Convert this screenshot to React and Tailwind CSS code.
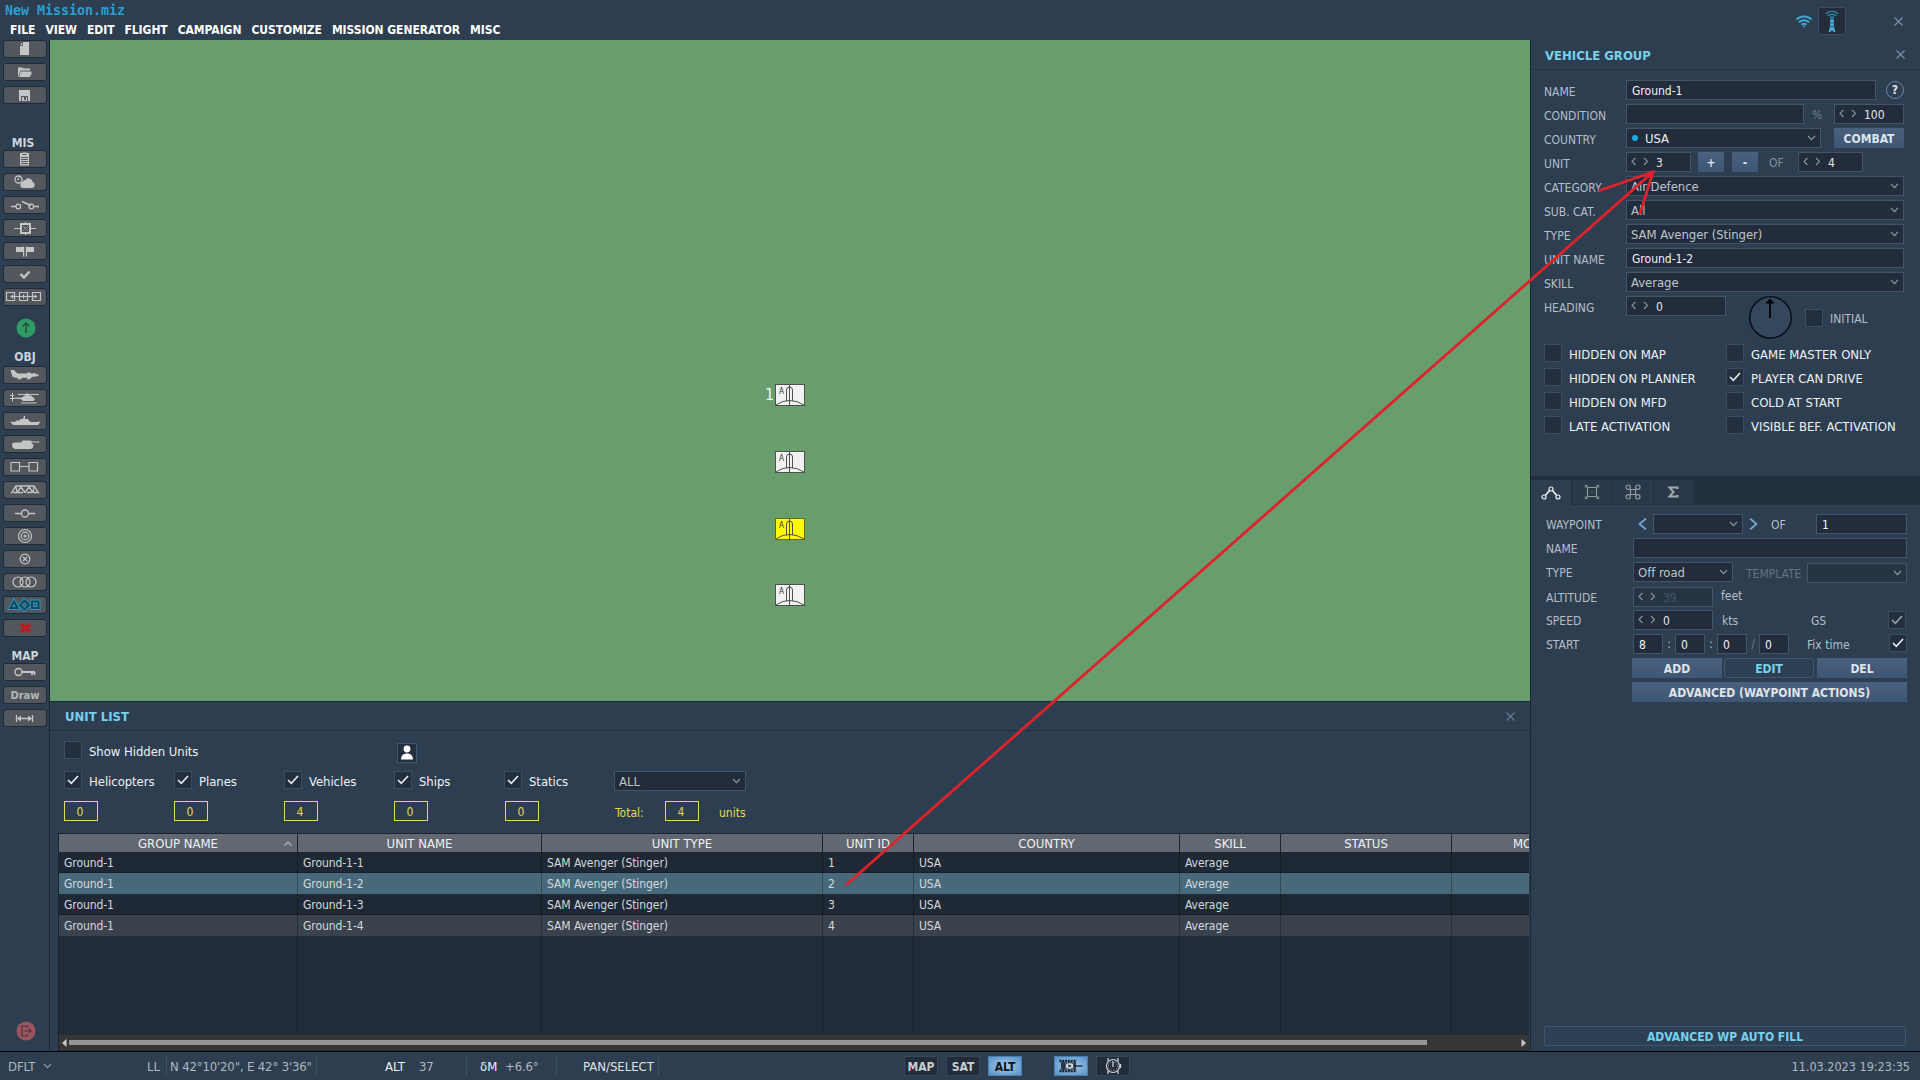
import React from "react";

const INK = "#c4c6c6";

/* ---------- small shared pieces ---------- */

function Chevron({ className = "", color = "#8d9aa8" }) {
  return (
    <svg width="9" height="6" viewBox="0 0 9 6" className={`shrink-0 ${className}`} fill="none" stroke={color} strokeWidth="1.1">
      <path d="M1 1l3.5 3.6L8 1" />
    </svg>
  );
}

function Close({ className = "", color = "#7e92a6" }) {
  return (
    <svg width="9" height="9" viewBox="0 0 9 9" className={`shrink-0 ${className}`} fill="none" stroke={color} strokeWidth="1.1">
      <path d="M.5 .5l8 8M8.5 .5l-8 8" />
    </svg>
  );
}

function Spin({ value, className, dim }) {
  return (
    <div className={`flex h-5 shrink-0 items-center border border-[#41546b] ${dim ? "bg-[#263444]" : "bg-[#222c3a]"} pl-1 text-[12px] ${className}`}>
      <svg width="18" height="9" viewBox="0 0 18 9" fill="none" stroke="#8b96a2" strokeWidth="1.1" className="mb-px shrink-0">
        <path d="M4.500 1L1 4.500L4.500 8M13 1l3.500 3.500L13 8" />
      </svg>
      <span className={`ml-[7px] pt-0.5 ${dim ? "text-[#46566a]" : "text-[#e3e6e9]"}`}>{value}</span>
    </div>
  );
}

function Field({ children, className = "" }) {
  return (
    <div className={`flex h-5 shrink-0 items-center border border-[#41546b] bg-[#222c3a] pt-0.5 pl-[5px] text-[12px] text-[#f0f2f4] ${className}`}>{children}</div>
  );
}

function Select({ children, className = "" }) {
  return (
    <div className={`flex h-5 shrink-0 items-center justify-between border border-[#41546b] bg-[#222c3a] pl-1 pr-1 text-[13px] tracking-[-0.06px] text-[#bfc5cb] ${className}`}>
      <span className="flex items-center pt-0.5">{children}</span>
      <Chevron />
    </div>
  );
}

function Check({ on, className = "", dim }) {
  return (
    <div className={`flex h-[18px] w-[18px] shrink-0 items-center justify-center border border-[#3a4d62] bg-[#232f3e] ${className}`}>
      {on && (
        <svg width="12" height="10" viewBox="0 0 12 10" fill="none" stroke={dim ? "#98a1aa" : "#e6e9ec"} strokeWidth="1.7" className="mb-px">
          <path d="M1 5l3.300 3.300L11 1" />
        </svg>
      )}
    </div>
  );
}

function Button({ children, className = "" }) {
  return (
    <div className={`flex h-5 shrink-0 items-center justify-center bg-linear-to-b from-[#49617f] to-[#3f5774] pt-0.5 text-[12px] font-bold text-[#dfe4e9] ${className}`}>{children}</div>
  );
}

function Outline({ children, className = "" }) {
  return (
    <div className={`flex h-5 shrink-0 items-center justify-center rounded-[2px] border border-[#41546b] bg-[#2e4054] pt-0.5 text-[12px] font-bold text-[#76d1ec] ${className}`}>{children}</div>
  );
}

/* ---------- left tool bar ---------- */

const icons = {
  file: (
    <g fill={INK}>
      <path d="M20 2h6v13H17V6h3z" />
      <path d="M17 5L19.300 2.500V5z" />
    </g>
  ),
  open: (
    <g fill={INK}>
      <path d="M15 14V4.500h4.500l1 1H27v2H17.500L16 12z" />
      <path d="M18 8.500H28.500V11L26.500 14H16z" />
    </g>
  ),
  save: (
    <g fill={INK}>
      <path fillRule="evenodd" d="M16 4h11v11H16zM18 10v5h7v-5z" />
      <path d="M19 11h2v3h2v-3h1v4h-5z" />
    </g>
  ),
  brief: (
    <g>
      <path fill={INK} d="M17 3h2.500V2.500h4V3H26v12.500H17z" />
      <path d="M19.500 4.500h4M18 7.500h7M18 9.500h7M18 11.500h7M18 13.500h7" stroke="#51575c" strokeWidth="1" />
    </g>
  ),
  weather: (
    <g>
      <circle cx="15.500" cy="6.500" r="3.500" fill="none" stroke={INK} strokeWidth="1.300" />
      <path d="M15.700 4.500v2.200H14" stroke={INK} fill="none" />
      <path fill={INK} d="M20 15a3.200 3.200 0 0 1-.6-6.200 2.500 2.500 0 0 1 2.700-1.600 4.200 4.200 0 0 1 7.600 1.800A3.100 3.100 0 0 1 29 15z" />
    </g>
  ),
  trigger: (
    <g fill="none" stroke={INK} strokeWidth="1.200">
      <path d="M8 10.500h5M30.500 10.500H36M19 5.500l9 4" strokeWidth="1.400" />
      <circle cx="15.300" cy="10.500" r="2.300" />
      <circle cx="28.300" cy="10.500" r="2.300" />
    </g>
  ),
  target: (
    <g fill="none" stroke={INK}>
      <path d="M11 9.500h7M26 9.500h7M22.500 3v3M22.500 13v3" />
      <rect x="18" y="5" width="9" height="9" strokeWidth="2" />
      <path d="M20.500 7.500l4 4M24.500 7.500l-4 4" strokeDasharray="1.500 1" />
    </g>
  ),
  joint: (
    <g fill={INK}>
      <path d="M13 5h7v5h-7zM24 5h7v5h-7zM20 4.500h1.200V14.500H20zM22.800 4.500H24V14.500h-1.200z" />
    </g>
  ),
  check: <path d="M17.500 9l3.500 3.500L26.500 6.500" fill="none" stroke={INK} strokeWidth="2.400" />,
  chain: (
    <g fill="none" stroke={INK} strokeWidth="1.200">
      <path d="M3.500 4.500h8v8h-8zM16.500 4.500h8v8h-8zM29.500 4.500h8v8h-8zM8 8.500h26M20.500 6.500v4" />
      <path fill={INK} stroke="none" d="M10 6.500v4L7 8.500zM31.500 6.500v4l3-2z" />
    </g>
  ),
  plane: (
    <path fill={INK} d="M7.500 4H11l3.500 3.500h9L25 6.500h2l1.500 1.300L31 7l3 1.200 1.500 .3V10l-5 .8-2 .5-1.500 2h-3l.5-1.500h-5.500l-1 1.500h-3.500l.5-1.500H13l-3-.8-1-1.500z" />
  ),
  heli: (
    <g>
      <path fill={INK} d="M10 8.800l9 -.3 2.500-2h6.500l4 3.500-1.500 2H20l-2.500-2-7.500-.2zM23 4.500h2.500V7H23z" />
      <path d="M15 5.500h21M9.500 4v8.500M7 6.500h4M7 9.500h4M18 14h15.500" stroke={INK} />
    </g>
  ),
  ship: (
    <path fill={INK} d="M7 9.500l5 .5 1-1.500h3.500l1-1.500h2.500l1-3h1v3h3l1 1.500 1.500 1.500h5.500l4.500-.5-2.500 3.500H10z" />
  ),
  tank: (
    <path fill={INK} d="M9 8.500l3-1h6L19.500 5.500h8l1.500 1h7.500v1H29l-.5 1 2 1-.5 3-2 1.500H12L9.500 12.500z" />
  ),
  link: (
    <g fill="none" stroke={INK} strokeWidth="1.200">
      <path d="M8 4.500h8.500v8.500H8zM26 4.500h8.500v8.500H26zM16.500 8.500H26" />
    </g>
  ),
  bridge: (
    <g fill="none" stroke={INK} strokeWidth="1.300">
      <path d="M8 12.500L13 5H31L36 12.500M10 11.500h4L13 6M14 11.500l4-5.500 4 5.500 4-5.500 4 5.500M15 11.500h5M24 11.500h5M30 11.500h4.500M30 11.500L31 6" />
    </g>
  ),
  node: (
    <g fill="none" stroke={INK} strokeWidth="1.300">
      <path d="M12 9.500h6.500M25.500 9.500H32" />
      <circle cx="22" cy="9.500" r="3.500" />
    </g>
  ),
  rings: (
    <g fill="none" stroke={INK} strokeWidth="1.200">
      <circle cx="22" cy="9" r="6.500" />
      <circle cx="22" cy="9" r="3.800" />
      <circle cx="22" cy="9" r="1" />
    </g>
  ),
  cross: (
    <g fill="none" stroke={INK} strokeWidth="1.200">
      <circle cx="22" cy="9" r="4.800" />
      <path d="M20 7l4 4M24 7l-4 4" />
    </g>
  ),
  circles: (
    <g fill="none" stroke={INK} strokeWidth="1.200">
      <circle cx="15" cy="9" r="5" />
      <circle cx="22" cy="9" r="5" />
      <circle cx="28" cy="9" r="5" />
    </g>
  ),
  shapes: (
    <g fill="none">
      <g stroke="#2699bb" strokeWidth="4">
        <path d="M11 5.500l3.500 6.500H7.500zM21.500 4.500L26 9l-4.500 4.500L17 9zM29 5.500h6.500V12H29z" />
      </g>
      <g stroke="#0f4a60" strokeWidth="2.200">
        <path d="M11 5.500l3.500 6.500H7.500zM21.500 4.500L26 9l-4.500 4.500L17 9zM29 5.500h6.500V12H29z" />
      </g>
    </g>
  ),
  del: <path d="M18 5l9 8M27 5l-9 8" stroke="#c2181c" strokeWidth="3.400" />,
  key: (
    <g fill="none" stroke={INK} strokeWidth="1.400">
      <circle cx="15.500" cy="9" r="3.500" />
      <path d="M19 9h13M29 9v3M31.500 9v3" strokeWidth="1.800" />
    </g>
  ),
  ruler: (
    <g stroke={INK} fill={INK}>
      <path d="M13.500 6v7M29.500 6v7M15 9.500h13" strokeWidth="1.300" />
      <path stroke="none" d="M14 9.500l4-3v6zM29 9.500l-4-3v6z" />
    </g>
  ),
};

function Tool({ icon, label }) {
  return (
    <div className="flex h-[18px] w-11 shrink-0 items-center justify-center rounded-[3px] border border-[#1f2a36] bg-[#51575c]">
      {label ? (
        <span className="font-['DejaVu_Sans'] text-[10px] font-bold text-[#b4b7b8]">{label}</span>
      ) : (
        <svg width="44" height="18" viewBox="0 0 44 18" className="shrink-0">{icons[icon]}</svg>
      )}
    </div>
  );
}

function ToolGroup({ items, className = "" }) {
  return (
    <div className={`flex flex-col gap-[5px] ${className}`}>
      {items.map((i) => (i === "draw" ? <Tool key={i} label="Draw" /> : <Tool key={i} icon={i} />))}
    </div>
  );
}

function ToolLabel({ children, className = "" }) {
  return <div className={`flex h-4 w-11 shrink-0 items-center justify-center pt-0.5 text-[12px] font-bold text-[#cbd3dc] ${className}`}>{children}</div>;
}

function Sidebar() {
  return (
    <div className="flex w-[50px] shrink-0 flex-col border-r border-[#1c2733] pl-[3px]">
      <ToolGroup items={["file", "open", "save"]} />
      <ToolLabel className="mt-[30px] -ml-0.5">MIS</ToolLabel>
      <ToolGroup items={["brief", "weather", "trigger", "target", "joint", "check", "chain"]} />
      <svg width="20" height="20" viewBox="0 0 20 20" className="mt-[12px] ml-[12.500px] shrink-0">
        <circle cx="10" cy="10" r="9.500" fill="#2f9b63" />
        <path d="M10 15V5M6.500 8.500L10 5l3.500 3.500" fill="none" stroke="#1c4a3c" strokeWidth="1.300" />
      </svg>
      <ToolLabel className="mt-[10px] mb-0.5">OBJ</ToolLabel>
      <ToolGroup items={["plane", "heli", "ship", "tank", "link", "bridge", "node", "rings", "cross", "circles", "shapes", "del"]} />
      <ToolLabel className="mt-[10px]">MAP</ToolLabel>
      <ToolGroup items={["key", "draw", "ruler"]} />
      <svg width="20" height="20" viewBox="0 0 20 20" className="mt-auto mb-[10px] ml-[12.500px] shrink-0">
        <circle cx="10" cy="10" r="9.500" fill="#9b5560" />
        <path d="M11.500 7V5H6v10h5.500v-2M8.500 10H15M13 8l2 2-2 2" fill="none" stroke="#50303e" strokeWidth="1.200" />
      </svg>
    </div>
  );
}

/* ---------- map ---------- */

function UnitMark({ active, className }) {
  return (
    <svg width="30" height="22" viewBox="0 0 30 22" className={`absolute left-[725px] ${className}`}>
      <rect x=".5" y=".5" width="29" height="21" fill={active ? "#fdfb00" : "#f1f1f1"} stroke={active ? "#6b6a10" : "#4c5450"} />
      <g fill="none" stroke="#3c3c40">
        <path d="M14.500 1v21M11.500 17V6a3 3 0 0 1 6 0v11M1 21Q7 16.500 14.500 16.500T29 21" strokeWidth=".9" />
      </g>
      <text x="4" y="9.500" fontSize="8" fontFamily="DejaVu Sans Condensed" fill="#2c2c30">A</text>
    </svg>
  );
}

function MapView() {
  return (
    <div className="relative h-[661px] shrink-0 bg-[#689d6e]">
      <span className="absolute top-[343px] left-[715px] text-[16px] text-[#e9f6e9]">1</span>
      <UnitMark className="top-[344px]" />
      <UnitMark className="top-[411px]" />
      <UnitMark active className="top-[478px]" />
      <UnitMark className="top-[544px]" />
    </div>
  );
}

/* ---------- unit list ---------- */

const columns = [
  ["GROUP NAME", "w-[239px]"],
  ["UNIT NAME", "w-[244px]"],
  ["UNIT TYPE", "w-[281px]"],
  ["UNIT ID", "w-[91px]"],
  ["COUNTRY", "w-[266px]"],
  ["SKILL", "w-[101px]"],
  ["STATUS", "w-[171px]"],
  ["MODEL", "w-[165px]"],
];

const rows = [1, 2, 3, 4].map((n) => ["Ground-1", `Ground-1-${n}`, "SAM Avenger (Stinger)", String(n), "USA", "Average", "", ""]);
const rowTone = [
  "bg-[#1f2935] border-[#151e29]",
  "bg-[#48697a] border-[#48697a]",
  "bg-[#1f2935] border-[#151e29]",
  "bg-[#3a424d] border-[#3a424d]",
];

function Count({ value, className = "" }) {
  return (
    <div className={`flex h-5 w-[34px] shrink-0 items-center justify-center border border-[#e8da4e] pt-0.5 pr-0.5 text-[12px] text-[#e8da4e] ${className}`}>{value}</div>
  );
}

function UnitList() {
  return (
    <div className="flex min-h-0 flex-1 flex-col border-t border-[#1c2733] text-[13px] text-[#eef1f4]">
      <div className="flex h-[29px] shrink-0 items-center justify-between border-b border-[#223040] pr-[15px] pl-[15px]">
        <span className="pt-0.5 text-[13px] font-bold text-[#76d1ec]">UNIT LIST</span>
        <Close color="#667c92" />
      </div>
      <div className="mt-[10px] flex h-[22px] shrink-0 items-start pl-[14px]">
        <Check />
        <span className="mt-px ml-[7px] w-[308px] leading-5 tracking-[-0.06px]">Show Hidden Units</span>
        <div className="mt-0.5 flex h-5 w-5 items-end justify-center border border-[#41546b] bg-[#232f3e] pb-0.5">
          <svg width="14" height="15" viewBox="0 0 14 15" fill="#fff">
            <circle cx="7" cy="4" r="3.400" />
            <path d="M1 14.500c0-4 2.500-6 6-6s6 2 6 6z" />
          </svg>
        </div>
      </div>
      <div className="mt-2 flex h-5 shrink-0 items-start pl-[14px]">
        {["Helicopters", "Planes", "Vehicles", "Ships", "Statics"].map((n) => (
          <div key={n} className="flex w-[110px] shrink-0">
            <Check on />
            <span className="mt-px ml-[7px] leading-5 tracking-[-0.06px]">{n}</span>
          </div>
        ))}
        <Select className="w-[132px]">ALL</Select>
      </div>
      <div className="mt-[10px] flex h-5 shrink-0 items-center pl-[14px]">
        {["0", "0", "4", "0"].map((v, i) => (
          <Count key={i} value={v} className="mr-[76px]" />
        ))}
        <Count value="0" className="ml-px" />
        <span className="mt-[3px] ml-[76px] w-[50px] text-[12px] text-[#e8da4e]">Total:</span>
        <Count value="4" />
        <span className="mt-[3px] ml-5 text-[12px] text-[#e8da4e]">units</span>
      </div>
      <div className="mt-3 mr-px ml-2 flex min-h-0 flex-1 flex-col overflow-hidden border-t border-l border-[#1a2430] bg-[#232d3a]">
        <div className="flex h-[18px] shrink-0 bg-[#616872]">
          {columns.map(([name, w], i) => (
            <div key={name} className={`flex shrink-0 items-center justify-center border-r border-[#1c2632] ${w}`}>
              {i === 0 && <span className="w-4" />}
              <span className="flex-1 pt-0.5 text-center leading-[18px]">{name}</span>
              {i === 0 && (
                <svg width="8" height="5" viewBox="0 0 8 5" className="mr-[5px] ml-[3px]" fill="none" stroke="#b9bec5" strokeWidth="1.100">
                  <path d="M.5 4.500L4 1l3.500 3.500" />
                </svg>
              )}
            </div>
          ))}
        </div>
        {rows.map((r, ri) => (
          <div key={ri} className={`flex h-[21px] shrink-0 border-b text-[12px] tracking-[-0.07px] text-[#d5d9dd] ${rowTone[ri]}`}>
            {r.map((c, ci) => (
              <div key={ci} className={`flex shrink-0 items-center border-r border-black/30 pt-0.5 pl-[5px] ${columns[ci][1]}`}>{c}</div>
            ))}
          </div>
        ))}
        <div className="flex min-h-0 flex-1">
          {columns.map(([name, w]) => (
            <div key={name} className={`shrink-0 border-r border-[#18222e] ${w}`} />
          ))}
        </div>
        <div className="mb-px flex h-[15px] shrink-0 items-center bg-[#363636]">
          <svg width="5" height="8" viewBox="0 0 5 8" className="ml-[3px] shrink-0"><path d="M4.500 0v8L0 4z" fill="#c9c9c9" /></svg>
          <div className="ml-0.5 h-[5px] w-[1358px] shrink-0 bg-[#969696]" />
          <svg width="5" height="8" viewBox="0 0 5 8" className="mr-[3px] ml-auto shrink-0"><path d="M.5 0v8L5 4z" fill="#c9c9c9" /></svg>
        </div>
      </div>
    </div>
  );
}

/* ---------- right panel ---------- */

function Row({ label, children }) {
  return (
    <div className="flex h-5 shrink-0 items-center">
      <span className="w-[82px] shrink-0 pt-[3px] text-[12px] text-[#b6bfc8]">{label}</span>
      {children}
    </div>
  );
}

function WpRow({ label, children, className = "" }) {
  return (
    <div className={`flex h-5 shrink-0 items-center text-[12px] text-[#b6bfc8] ${className}`}>
      <span className="w-[87px] shrink-0 pt-0.5">{label}</span>
      {children}
    </div>
  );
}

function Flag({ children, on }) {
  return (
    <div className="flex h-[18px] items-center text-[13px] whitespace-nowrap text-[#eef1f4]">
      <Check on={on} />
      <span className="ml-[7px] pt-[3px]">{children}</span>
    </div>
  );
}

function VehicleGroup() {
  return (
    <>
      <div className="flex h-[30px] shrink-0 items-center justify-between border-b border-[#223040] pr-[15px] pl-[14px]">
        <span className="pt-0.5 text-[13px] font-bold text-[#76d1ec]">VEHICLE GROUP</span>
        <Close />
      </div>
      <div className="mt-[10px] flex shrink-0 flex-col gap-1 pl-[13px]">
        <Row label="NAME">
          <Field className="w-[250px]">Ground-1</Field>
          <div className="ml-[10px] flex h-[18px] w-[18px] items-center justify-center rounded-full border border-[#6c83a0] text-[12px] font-bold text-[#e3e6e9]">?</div>
        </Row>
        <Row label="CONDITION">
          <Field className="w-[178px]" />
          <span className="w-[30px] pt-0.5 pl-2 text-[12px] text-[#74808d]">%</span>
          <Spin value="100" className="w-[70px]" />
        </Row>
        <Row label="COUNTRY">
          <Select className="w-[195px]">
            <i className="mb-0.5 ml-px h-1.5 w-1.5 rounded-full bg-[#21a9e6]" />
            <span className="ml-[7px] text-[#eef1f4]">USA</span>
          </Select>
          <Button className="ml-[13px] w-[70px]">COMBAT</Button>
        </Row>
        <Row label="UNIT">
          <Spin value="3" className="w-[65px]" />
          <Button className="ml-[7px] w-[26px]">+</Button>
          <Button className="ml-2 w-[26px]">-</Button>
          <span className="w-10 pt-0.5 pl-[11px] text-[12px] text-[#8592a0]">OF</span>
          <Spin value="4" className="w-[65px]" />
        </Row>
        <Row label="CATEGORY"><Select className="w-[278px]">Air Defence</Select></Row>
        <Row label="SUB. CAT."><Select className="w-[278px]">All</Select></Row>
        <Row label="TYPE"><Select className="w-[278px]">SAM Avenger (Stinger)</Select></Row>
        <Row label="UNIT NAME"><Field className="w-[278px]">Ground-1-2</Field></Row>
        <Row label="SKILL"><Select className="w-[278px]">Average</Select></Row>
        <div className="flex h-11 items-start">
          <Row label="HEADING"><Spin value="0" className="w-[100px]" /></Row>
          <svg width="44" height="44" viewBox="0 0 44 44" className="ml-[22px] shrink-0">
            <circle cx="22.500" cy="21.500" r="20.700" fill="#35475c" stroke="#0b1119" strokeWidth="1.600" />
            <path d="M22 22V5" stroke="#000" strokeWidth="1.800" />
            <path d="M22 2.500l4.500 5h-9z" fill="#000" />
          </svg>
          <Check className="mt-[13px] ml-[13px]" />
          <span className="mt-[13px] ml-[7px] text-[12px] leading-5 text-[#b6bfc8]">INITIAL</span>
        </div>
      </div>
      <div className="mt-1 grid shrink-0 grid-cols-[182px_1fr] gap-y-1.5 pl-[13px]">
        <Flag>HIDDEN ON MAP</Flag>
        <Flag>GAME MASTER ONLY</Flag>
        <Flag>HIDDEN ON PLANNER</Flag>
        <Flag on>PLAYER CAN DRIVE</Flag>
        <Flag>HIDDEN ON MFD</Flag>
        <Flag>COLD AT START</Flag>
        <Flag>LATE ACTIVATION</Flag>
        <Flag>VISIBLE BEF. ACTIVATION</Flag>
      </div>
    </>
  );
}

function Tabs() {
  return (
    <div className="mt-[42px] flex h-[29px] shrink-0 items-end gap-px bg-[#223040]">
      <div className="flex h-[25px] w-10 items-center justify-center bg-[#2d3e50] pr-px">
        <svg width="20" height="14" viewBox="0 0 20 14" fill="none" stroke="#f2f4f6" strokeWidth="1.200">
          <circle cx="10" cy="3" r="2" /><circle cx="3" cy="11" r="2" /><circle cx="17" cy="11" r="2" />
          <path d="M8.500 4.500L4.300 9.500M11.500 4.500l4.200 5" strokeWidth="1.600" />
        </svg>
      </div>
      <div className="mb-px flex h-6 w-10 items-center justify-center bg-[#2a3949]">
        <svg width="16" height="16" viewBox="0 0 16 16" fill="none" stroke="#8f989f" strokeWidth="1.200">
          <path d="M3.500 3.500h9v9h-9zM1 1l3 3M15 1l-3 3M1 15l3-3M15 15l-3-3M7.300 8h1.400" />
          <path d="M1 3.500L3.500 1M12.500 1L15 3.500M1 12.500L3.500 15M12.500 15L15 12.500" strokeWidth="1" />
        </svg>
      </div>
      <div className="mb-px flex h-6 w-10 items-center justify-center bg-[#2a3949] pr-px">
        <svg width="16" height="16" viewBox="0 0 16 16" fill="none" stroke="#8f989f" strokeWidth="1.200">
          <path d="M5.500 5.500h5v5h-5z" />
          <circle cx="3.200" cy="3.200" r="2.200" /><circle cx="12.800" cy="3.200" r="2.200" /><circle cx="3.200" cy="12.800" r="2.200" /><circle cx="12.800" cy="12.800" r="2.200" />
        </svg>
      </div>
      <div className="mb-px flex h-6 w-10 items-center justify-center bg-[#2a3949] pr-0.5">
        <svg width="12" height="12" viewBox="0 0 12 12" fill="none" stroke="#a4a9ac" strokeWidth="2">
          <path d="M10.500 3V1.500H2.500L6.500 6l-4 4.500h8V9" />
        </svg>
      </div>
    </div>
  );
}

function Waypoint() {
  return (
    <div className="mt-[9px] flex shrink-0 flex-col gap-1 pl-[15px]">
      <WpRow label="WAYPOINT">
        <svg width="9" height="12" viewBox="0 0 9 12" className="ml-[5px]" fill="none" stroke="#7ba7d4" strokeWidth="1.700"><path d="M8 .5L1.500 6 8 11.500" /></svg>
        <Select className="ml-1.5 w-[90px]" />
        <svg width="9" height="12" viewBox="0 0 9 12" className="ml-1.5" fill="none" stroke="#7ba7d4" strokeWidth="1.700"><path d="M1 .5L7.500 6 1 11.500" /></svg>
        <span className="w-[58px] pt-0.5 pl-[13px]">OF</span>
        <Field className="w-[91px]">1</Field>
      </WpRow>
      <WpRow label="NAME"><Field className="w-[274px]" /></WpRow>
      <WpRow label="TYPE">
        <Select className="w-[100px]">Off road</Select>
        <span className="mt-[3px] w-[74px] pl-[13px] text-[#66727f]">TEMPLATE</span>
        <Select className="mt-0.5 w-[100px] bg-[#263444]" />
      </WpRow>
      <WpRow label="ALTITUDE" className="mt-px">
        <Spin dim value="39" className="w-20" />
        <span className="-mt-[3px] ml-2 text-[12px]">feet</span>
      </WpRow>
      <WpRow label="SPEED" className="-mt-px">
        <Spin value="0" className="w-20" />
        <span className="ml-[9px] w-[89px] pt-px">kts</span>
        <span className="w-[77px] pt-px">GS</span>
        <Check on dim />
      </WpRow>
      <WpRow label="START">
        <Field className="w-[30px]">8</Field><span className="w-3 text-center">:</span>
        <Field className="w-[30px]">0</Field><span className="w-3 text-center">:</span>
        <Field className="w-[30px]">0</Field><span className="w-3 text-center text-[#74808d]">/</span>
        <Field className="w-[30px]">0</Field>
        <span className="ml-[18px] w-[82px] pt-px">Fix time</span>
        <Check on className="mb-0.5" />
      </WpRow>
      <div className="flex gap-0.5 pl-[86px]">
        <Button className="w-[90px]">ADD</Button>
        <Outline className="w-[90px]">EDIT</Outline>
        <Button className="ml-px w-[90px]">DEL</Button>
      </div>
      <div className="pl-[86px]"><Button className="w-[275px]">ADVANCED (WAYPOINT ACTIONS)</Button></div>
    </div>
  );
}

/* ---------- top and bottom bars ---------- */

function TopBar() {
  return (
    <div className="flex h-10 shrink-0 justify-between">
      <div>
        <div className="h-5 pt-px pl-[5px] font-['DejaVu_Sans_Mono'] text-[13.300px] leading-5 font-bold text-[#2a9fd0]">New Mission.miz</div>
        <div className="flex h-5 items-center gap-[10px] pl-[10px] text-[12px] font-bold tracking-[-0.05px] text-white">
          {["FILE", "VIEW", "EDIT", "FLIGHT", "CAMPAIGN", "CUSTOMIZE", "MISSION GENERATOR", "MISC"].map((m) => (
            <span key={m}>{m}</span>
          ))}
        </div>
      </div>
      <div className="flex h-[42px] items-center pr-[17px]">
        <svg width="18" height="13" viewBox="0 0 18 13" fill="none" stroke="#3fa5cc" strokeWidth="1.900">
          <path d="M1.500 4.500a11 11 0 0 1 15 0M4 7.200a7.500 7.500 0 0 1 10 0M6.500 9.700a4 4 0 0 1 5 0" />
          <circle cx="9" cy="11.500" r="1" fill="#3fa5cc" stroke="none" />
        </svg>
        <div className="ml-[5px] flex h-7 w-7 items-center justify-center rounded-[3px] border border-[#3d4c60] bg-[#222c3a]">
          <svg width="16" height="24" viewBox="0 0 16 24" fill="none">
            <path d="M1.500 5a9 9 0 0 1 13 0M3.700 7a6 6 0 0 1 8.600 0M5.700 9a3.200 3.200 0 0 1 4.600 0" stroke="#2c8298" strokeWidth="1.400" />
            <path d="M8 9l2 2.500v6L11.500 23H9.500L8 21 6.500 23h-2L6 17.500v-6z" fill="#46a8cf" />
            <path d="M6.500 14h3M6 17.500h4" stroke="#2a5f7a" />
          </svg>
        </div>
        <Close className="ml-[48px]" />
      </div>
    </div>
  );
}

function Divider({ className = "" }) {
  return <i className={`h-5 w-px shrink-0 bg-[#3e5064] ${className}`} />;
}

function MapMode({ children, active, className = "" }) {
  return (
    <div
      className={`flex h-5 w-[34px] shrink-0 items-center justify-center border pt-0.5 text-[12px] font-bold tracking-[-0.05px] ${
        active ? "border-[#4a7fb4] bg-radial from-[#a9cdec] to-[#5590c6] text-[#0d1620]" : "border-[#35475a] bg-[#222c3a] text-[#c9ced4]"
      } ${className}`}
    >
      {children}
    </div>
  );
}

function BottomBar() {
  return (
    <div className="flex h-[29px] shrink-0 items-center border-t border-black text-[13px] whitespace-nowrap text-[#b0b8c0]">
      <span className="w-10 shrink-0 pt-0.5 pl-2 tracking-[-0.1px]">DFLT</span>
      <Chevron className="ml-[3px]" />
      <span className="ml-[95px] w-[19px] shrink-0 pt-0.5">LL</span>
      <Divider />
      <span className="ml-[3px] w-[146px] shrink-0 pt-0.5 tracking-[-0.15px]">N 42°10'20", E 42° 3'36"</span>
      <Divider />
      <span className="ml-[68px] w-[34px] shrink-0 pt-0.5 text-[#eef1f4]">ALT</span>
      <span className="w-[47px] shrink-0 pt-0.5 tracking-[-0.3px]">37</span>
      <Divider />
      <span className="ml-[13px] w-[25px] shrink-0 pt-0.5 text-[#eef1f4]">δM</span>
      <span className="w-[51px] shrink-0 pt-0.5 tracking-[-0.15px]">+6.6°</span>
      <Divider />
      <span className="ml-[26px] w-[75px] shrink-0 pt-0.5 text-[#dfe3e7]">PAN/SELECT</span>
      <Divider />
      <MapMode className="ml-[245px]">MAP</MapMode>
      <MapMode className="ml-2">SAT</MapMode>
      <MapMode active className="ml-2">ALT</MapMode>
      <MapMode active className="ml-8">
        <svg width="24" height="14" viewBox="0 0 24 14" className="mb-0.5">
          <path d="M.5 2h17M.5 12h17" stroke="#17222e" strokeWidth="2.500" strokeDasharray="2 .8" />
          <path d="M2 3h4.500v8H2zM14.500 3H17v8h-2.500z" fill="#2b3a49" />
          <ellipse cx="10.500" cy="7" rx="4.500" ry="3.400" fill="#c5cdd5" stroke="#17222e" />
          <path d="M9 6l3 1-3 1" stroke="#17222e" fill="none" strokeWidth=".8" />
          <path d="M15 7h8.500" stroke="#17222e" strokeWidth="1.300" />
        </svg>
      </MapMode>
      <MapMode className="ml-2">
        <svg width="18" height="18" viewBox="0 0 18 18" fill="none" stroke="#cfd4d9" className="mb-0.5">
          <circle cx="9" cy="9" r="6.500" strokeWidth="1.200" />
          <circle cx="9" cy="9" r="4.500" strokeDasharray="1 1.800" />
          <path d="M9 4.500V10M4 1v3M14 1v3M4 14v3M14 14v3M16.500 7v4" strokeWidth="1.300" />
        </svg>
      </MapMode>
      <span className="ml-auto pt-0.5 pr-[10px] text-[12.500px]">11.03.2023 19:23:35</span>
    </div>
  );
}

export default function App() {
  return (
    <div className="relative flex h-[1080px] w-[1920px] flex-col overflow-hidden bg-[#2d3e50] font-['DejaVu_Sans_Condensed','DejaVu_Sans',sans-serif]">
      <TopBar />
      <div className="flex h-[1011px] shrink-0">
        <Sidebar />
        <div className="flex w-[1480px] shrink-0 flex-col">
          <MapView />
          <UnitList />
        </div>
        <div className="flex w-[390px] shrink-0 flex-col border-l border-[#1c2733]">
          <VehicleGroup />
          <Tabs />
          <Waypoint />
          <Outline className="mt-auto mb-[5px] ml-[13px] w-[362px]">ADVANCED WP AUTO FILL</Outline>
        </div>
      </div>
      <BottomBar />
      <svg width="1920" height="1080" viewBox="0 0 1920 1080" className="pointer-events-none absolute inset-0" fill="none" stroke="#e0222a" strokeWidth="2.800">
        <path d="M846 885L1653 172M1598 191L1653 172L1640 214" />
      </svg>
    </div>
  );
}
